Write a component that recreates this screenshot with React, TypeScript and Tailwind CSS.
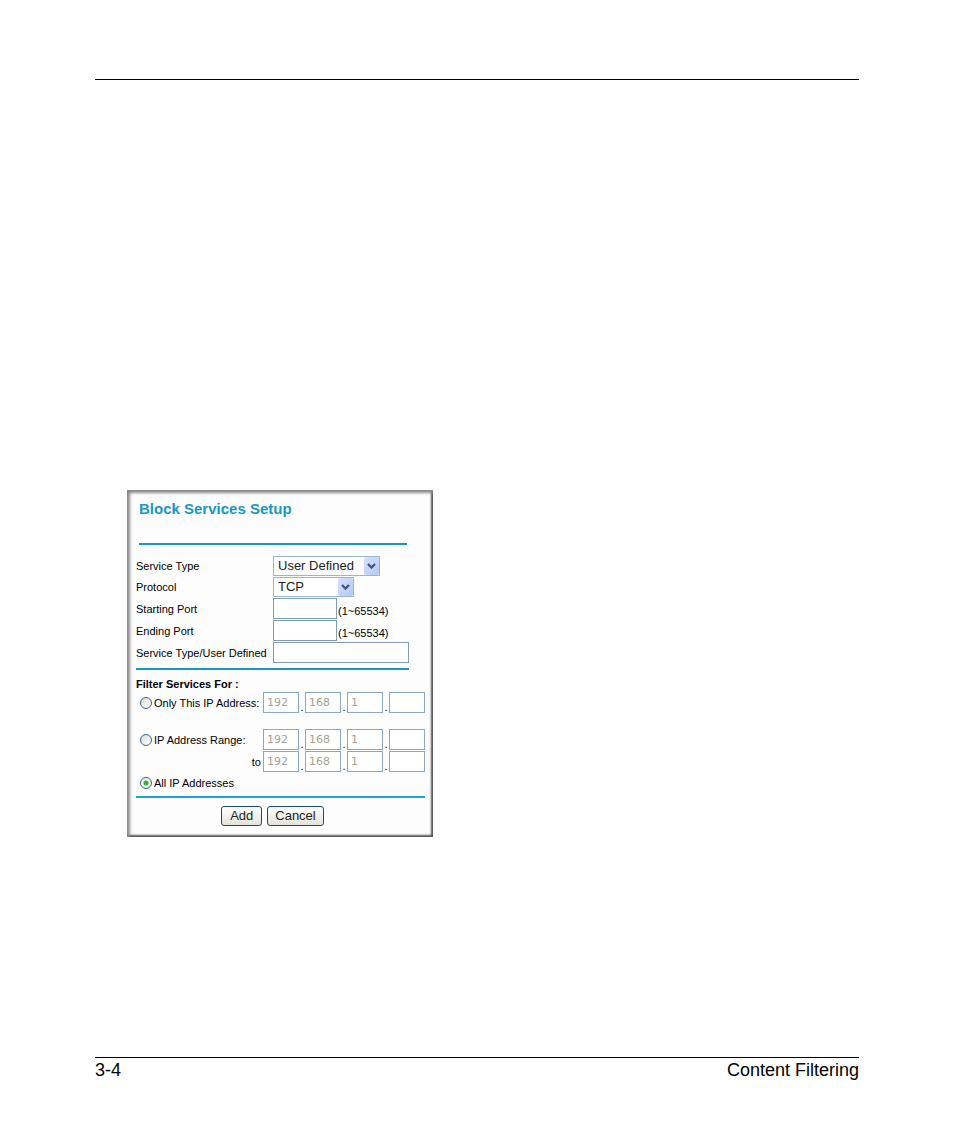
import type { ReactNode } from "react";

const field =
  "border border-[#7f9db9] bg-white px-1 outline-none";

function Dropdown({ id, value, width }: { id: string; value: string; width: string }) {
  return (
    <span className={`relative flex h-5 ${width}`}>
      <select
        id={id}
        defaultValue={value}
        className="w-full appearance-none border border-[#9bb5cf] bg-white pl-1 font-['Liberation_Sans',Arial,sans-serif] text-[13px] leading-4 text-[#222] outline-none"
      >
        <option>{value}</option>
      </select>
      <span className="pointer-events-none absolute inset-y-px right-px flex w-[15px] items-center justify-center rounded-xs bg-linear-to-br from-[#d6e2fd] to-[#b3c8f5]">
        <svg width="9" height="7" viewBox="0 0 9 7" fill="none" stroke="#40587f" strokeWidth="2.4">
          <path d="M1 1l3.500 3.500L8 1" />
        </svg>
      </span>
    </span>
  );
}

function Row({ id, label, children }: { id: string; label: string; children: ReactNode }) {
  return (
    <div className="flex items-center">
      <label htmlFor={id} className="w-[137px] shrink-0 whitespace-nowrap">
        {label}
      </label>
      {children}
    </div>
  );
}

function IpFields({ name }: { name: string }) {
  return (
    <div className="flex items-end">
      {["192", "168", "1", ""].map((part, i) => (
        <span key={i} className="flex items-end">
          {i > 0 && <span className="w-1.5 text-center leading-3">.</span>}
          <input
            aria-label={`${name} part ${i + 1}`}
            defaultValue={part}
            disabled
            className="h-[21px] w-9 border border-[#8da8c4] bg-white px-[3px] font-['DejaVu_Sans',Verdana,sans-serif] text-[11px] text-[#a5a295]"
          />
        </span>
      ))}
    </div>
  );
}

function Choice({ id, label, checked }: { id: string; label: string; checked?: boolean }) {
  return (
    <span className="flex items-center gap-0.5 pl-1">
      <input
        id={id}
        type="radio"
        name="filter"
        defaultChecked={checked}
        className="size-3 shrink-0 appearance-none rounded-full border border-[#3f6185] bg-[linear-gradient(135deg,#dcdcd7,#ffffff)] checked:bg-[radial-gradient(circle,#2fb52f_0px,#2fb52f_2px,#f4f6f4_3px)]"
      />
      <label htmlFor={id} className="whitespace-nowrap">
        {label}
      </label>
    </span>
  );
}

const button =
  "h-5 min-w-[41px] rounded-[3px] border border-[#1c4a7c] bg-linear-to-b from-white to-[#e4e2da] px-[7px] text-[13px] leading-4 text-[#222]";

export default function App() {
  return (
    <div className="flex min-h-screen flex-col bg-white px-[95px] pt-[79px] pb-[65px] font-['Liberation_Sans',Arial,sans-serif] text-black">
      <header className="border-t border-black" />
      <main className="grow pt-[410px] pl-8">
        <form
          onSubmit={(e) => e.preventDefault()}
          className="w-[306px] bg-[#fdfdfd] pt-[9px] pr-2 pb-[11px] pl-[9px] text-[11px] leading-4 shadow-[inset_3px_3px_3px_#8a8a8a,inset_-2px_-2px_2px_#555]"
        >
          <h1 className="pl-[3px] text-[15px] leading-5 font-bold text-[#1797c3]">
            Block Services Setup
          </h1>
          <hr className="mt-6 mr-[18px] ml-[3px] border-t-2 border-[#1797b9]" />
          <div className="mt-[11px] flex flex-col gap-px">
            <Row id="service" label="Service Type">
              <Dropdown id="service" value="User Defined" width="w-[107px]" />
            </Row>
            <Row id="protocol" label="Protocol">
              <Dropdown id="protocol" value="TCP" width="w-[81px]" />
            </Row>
            <Row id="start" label="Starting Port">
              <input id="start" className={`${field} h-[21px] w-16`} />
              <span className="pt-1 pl-px">(1~65534)</span>
            </Row>
            <Row id="end" label="Ending Port">
              <input id="end" className={`${field} h-[21px] w-16`} />
              <span className="pt-1 pl-px">(1~65534)</span>
            </Row>
            <Row id="custom" label="Service Type/User Defined">
              <input id="custom" className={`${field} h-[21px] w-[136px]`} />
            </Row>
          </div>
          <hr className="mt-[5px] mr-4 border-t-2 border-[#1797b9]" />
          <h2 className="mt-1.5 font-bold">Filter Services For :</h2>
          <div className="flex justify-between">
            <Choice id="single" label="Only This IP Address:" />
            <IpFields name="IP address" />
          </div>
          <div className="mt-4 flex justify-between">
            <Choice id="range" label="IP Address Range:" />
            <IpFields name="Range start" />
          </div>
          <div className="mt-px flex items-center justify-end gap-0.5">
            <span>to</span>
            <IpFields name="Range end" />
          </div>
          <div className="mt-[3px]">
            <Choice id="all" label="All IP Addresses" checked />
          </div>
          <hr className="mt-[5px] border-t-2 border-[#1ba3d6]" />
          <div className="mt-2 flex justify-center gap-[5px] pr-4">
            <button type="submit" className={button}>Add</button>
            <button type="button" className={button}>Cancel</button>
          </div>
        </form>
      </main>
      <footer className="flex justify-between border-t border-black pt-0.5 text-[18px] leading-5">
        <span>3-4</span>
        <span>Content Filtering</span>
      </footer>
    </div>
  );
}
